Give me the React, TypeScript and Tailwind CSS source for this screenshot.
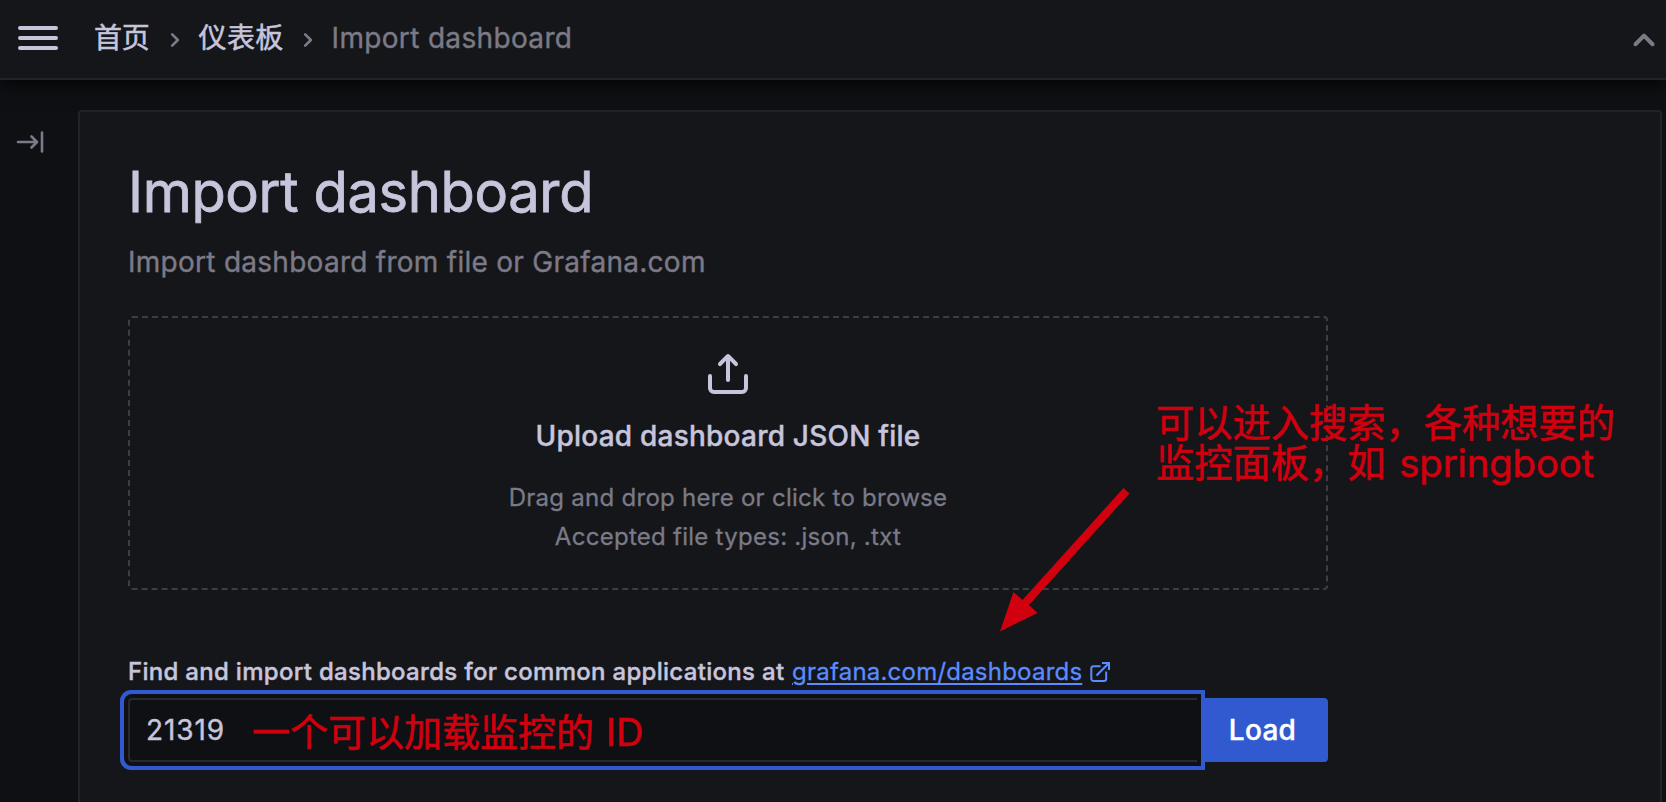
import React from "react";

const FONT = "font-['Inter','Noto_Sans_CJK_SC',sans-serif]";

function Icon({ d, className }: { d: string; className: string }) {
  return (
    <svg viewBox="0 0 24 24" fill="currentColor" className={className} aria-hidden="true">
      <path d={d} />
    </svg>
  );
}

const angleRight =
  "M14.83,11.29,10.59,7.05a1,1,0,0,0-1.42,0,1,1,0,0,0,0,1.41L12.71,12,9.17,15.54a1,1,0,0,0,0,1.41,1,1,0,0,0,.71.29,1,1,0,0,0,.71-.29l4.24-4.24A1,1,0,0,0,14.83,11.29Z";
const angleUp =
  "M17,13.41,12.71,9.17a1,1,0,0,0-1.42,0L7.05,13.41a1,1,0,0,0,0,1.42,1,1,0,0,0,1.41,0L12,11.29l3.54,3.54a1,1,0,0,0,.7.29,1,1,0,0,0,.71-.29A1,1,0,0,0,17,13.41Z";
const upload =
  "M8.71,7.71,11,5.41V15a1,1,0,0,0,2,0V5.41l2.29,2.3a1,1,0,0,0,1.42,0,1,1,0,0,0,0-1.42l-4-4a1,1,0,0,0-.33-.21,1,1,0,0,0-.76,0,1,1,0,0,0-.33.21l-4,4A1,1,0,1,0,8.71,7.71ZM21,12a1,1,0,0,0-1,1v6a1,1,0,0,1-1,1H5a1,1,0,0,1-1-1V13a1,1,0,0,0-2,0v6a3,3,0,0,0,3,3H19a3,3,0,0,0,3-3V13A1,1,0,0,0,21,12Z";
const bars =
  "M3,8H21a1,1,0,0,0,0-2H3A1,1,0,0,0,3,8Zm18,8H3a1,1,0,0,0,0,2H21a1,1,0,0,0,0-2Zm0-5H3a1,1,0,0,0,0,2H21a1,1,0,0,0,0-2Z";

function Header() {
  return (
    <header className="z-10 flex h-20 shrink-0 items-center border-b-2 border-[#222327] bg-[#15161a] pl-3.5 shadow-[0_2px_20px_#000]">
      <Icon d={bars} className="-mt-0.5 size-12 text-[#c7c5dc]" />
      <nav className="ml-8 flex items-center text-[28px] leading-none tracking-[0.3px]">
        <span className="-mt-0.5 tracking-[-0.2px] [-webkit-text-stroke:0.5px]">首页</span>
        <Icon d={angleRight} className="mt-0.5 mr-2 ml-[9px] size-8 text-[#7b7a86]" />
        <span className="-mt-0.5 tracking-[0.3px] [-webkit-text-stroke:0.5px]">仪表板</span>
        <Icon d={angleRight} className="mx-2 mt-0.5 size-8 text-[#7b7a86]" />
        <span className="-mt-0.5 tracking-[0.34px] text-[#7b7a86] [-webkit-text-stroke:0.4px]">Import dashboard</span>
      </nav>
      <Icon d={angleUp} className="mt-0.5 -mr-0.5 ml-auto size-12 text-[#7b7a86]" />
    </header>
  );
}

function DropZone() {
  return (
    <div className="mt-8 flex h-[274px] w-[1200px] flex-col items-center rounded-sm border-2 border-dashed border-[#3d3e44] pt-8">
      <Icon d={upload} className="size-12 text-[#c7c5dc]" />
      <div className="mt-4 text-[28px] leading-[44px] font-medium tracking-[0.22px] [-webkit-text-stroke:0.4px]">
        Upload dashboard JSON file
      </div>
      <div className="mt-5 text-center text-[24px] leading-[39px] tracking-[0.27px] text-[#7b7a86] [-webkit-text-stroke:0.3px]">
        <div>Drag and drop here or click to browse</div>
        <div>Accepted file types: .json, .txt</div>
      </div>
    </div>
  );
}

export default function App() {
  return (
    <div className={`relative flex h-[802px] w-[1666px] flex-col overflow-hidden bg-[#0f1014] text-[#c7c5dc] ${FONT}`}>
      <Header />
      <div className="flex flex-1">
        <aside className="w-[78px] shrink-0 pt-[46px] pl-4">
          <svg
            viewBox="0 0 28 32"
            className="h-8 w-7 text-[#7b7a86]"
            fill="none"
            stroke="currentColor"
            strokeWidth="2.6"
            strokeLinecap="round"
            strokeLinejoin="round"
          >
            <path d="M2 16H20.500M15.500 10.500L21 16l-5.500 5.500M26 6.500v19" />
          </svg>
        </aside>
        <main className="mt-[30px] h-[720px] w-[1584px] rounded border-2 border-[#222327] bg-[#15161a] pt-12 pl-12">
          <h1 className="text-[56px] leading-[64px] font-normal tracking-[-0.35px] [-webkit-text-stroke:0.8px]">Import dashboard</h1>
          <p className="mt-4 text-[28px] leading-[44px] tracking-[0.27px] text-[#7b7a86] [-webkit-text-stroke:0.4px]">
            Import dashboard from file or Grafana.com
          </p>
          <DropZone />
          <div className="mt-[66px] flex h-8 items-center text-[24px] font-medium tracking-[0.3px]">
            <span className="[-webkit-text-stroke:0.4px]">Find and import dashboards for common applications at&nbsp;</span>
            <a className="ml-px font-normal tracking-[0.22px] text-[#5a8cff] underline decoration-2 underline-offset-[3px] [-webkit-text-stroke:0.3px]">
              grafana.com/dashboards
            </a>
            <svg viewBox="0 0 20 20" className="ml-2 size-5 text-[#5a8cff]" fill="none" stroke="currentColor" strokeWidth="2">
              <path d="M10.500 4.300H3.500A2.200 2.200 0 0 0 1.300 6.500V16.800A2.200 2.200 0 0 0 3.500 19H14A2.200 2.200 0 0 0 16.200 16.800V9.500M6.500 13.500L18.500 1.500M12 1H19V8" />
            </svg>
          </div>
          <div className="mt-2.5 flex h-16 w-[1200px]">
            <div className="z-10 flex flex-1 items-center rounded-l border-2 border-r-0 border-[#28292e] bg-[#0f1014] pl-4 text-[28px] tracking-[0.9px] shadow-[0_0_0_4px_#0f1014,0_0_0_8px_#3159d0] [-webkit-text-stroke:0.4px]">
              21319
            </div>
            <button className="w-[131px] rounded-r bg-[#3159d0] text-[28px] font-medium tracking-[0.3px] text-white [-webkit-text-stroke:0.4px]">
              Load
            </button>
          </div>
        </main>
      </div>

      <div className="absolute top-[403px] left-[1156px] z-20 text-[38.25px] leading-10 whitespace-nowrap text-[#d0000f] [-webkit-text-stroke:0.6px]">
        <div>可以进入搜索，各种想要的</div>
        <div>
          监控面板，如 <span className="ml-[3px] tracking-[-0.1px]">springboot</span>
        </div>
      </div>
      <div className="absolute top-[708px] left-[252px] z-20 text-[38px] leading-12 whitespace-nowrap text-[#d0000f] [-webkit-text-stroke:0.6px]">
        一个可以加载监控的 <span className="ml-px">ID</span>
      </div>
      <svg className="absolute top-[480px] left-[990px] z-20 h-[160px] w-[150px]" viewBox="990 480 150 160" fill="#d0000f">
        <path d="M1123.500 488L1129.500 493.500L1029 605L1037.500 613L1000 631.500L1013.500 592L1022.500 600Z" />
      </svg>
    </div>
  );
}
